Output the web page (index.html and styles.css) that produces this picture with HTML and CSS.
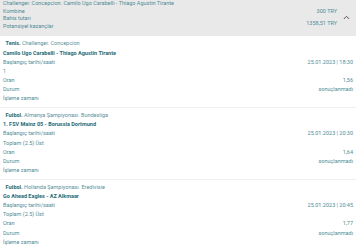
FILE: index.html
```html
<!DOCTYPE html>
<html lang="tr">
<head>
  <meta charset="UTF-8" />
  <meta name="viewport" content="width=device-width, initial-scale=1.0"/>
  <title>Kupon Detayı</title>
  <link rel="stylesheet" href="styles.css">
</head>
<body>

  <!-- KUPON ÖZETİ -->
  <div class="summary">
    <div class="summary-left">
      <div>Challenger. Concepcion. Camilo Ugo Carabelli - Thiago Agustin Tirante</div>
      <div>Kombine</div>
      <div>Bahis tutarı</div>
      <div>Potansiyel kazançlar</div>
    </div>
    <div class="summary-right">
      <div>300 TRY</div>
      <div>1358,51 TRY</div>
    </div>
    <svg class="chevron" width="7" height="5" viewBox="0 0 7 5">
      <path d="M0.8 4 L3.5 1.3 L6.2 4" fill="none" stroke="#555" stroke-width="1"/>
    </svg>
  </div>

  <!-- BAHİSLER -->
  <div class="bet">
    <div class="bet-title"><b>Tenis.</b> Challenger. Concepcion</div>
    <div class="bet-match">Camilo Ugo Carabelli - Thiago Agustin Tirante</div>
    <div class="row"><span>Başlangıç tarihi/saati</span><span>25.01.2023 | 18:30</span></div>
    <div class="row"><span>1</span></div>
    <div class="row"><span>Oran</span><span>1,56</span></div>
    <div class="row"><span>Durum</span><span>sonuçlanmadı</span></div>
    <div class="row"><span>İşleme zamanı</span></div>
  </div>

  <div class="bet">
    <div class="bet-title"><b>Futbol.</b> Almanya Şampiyonası. Bundesliga</div>
    <div class="bet-match">1. FSV Mainz 05 - Borussia Dortmund</div>
    <div class="row"><span>Başlangıç tarihi/saati</span><span>25.01.2023 | 20:30</span></div>
    <div class="row"><span>Toplam (2.5) Üst</span></div>
    <div class="row"><span>Oran</span><span>1,64</span></div>
    <div class="row"><span>Durum</span><span>sonuçlanmadı</span></div>
    <div class="row"><span>İşleme zamanı</span></div>
  </div>

  <div class="bet">
    <div class="bet-title"><b>Futbol.</b> Hollanda Şampiyonası. Eredivisie</div>
    <div class="bet-match">Go Ahead Eagles - AZ Alkmaar</div>
    <div class="row"><span>Başlangıç tarihi/saati</span><span>25.01.2023 | 20:45</span></div>
    <div class="row"><span>Toplam (2.5) Üst</span></div>
    <div class="row"><span>Oran</span><span>1,77</span></div>
    <div class="row"><span>Durum</span><span>sonuçlanmadı</span></div>
    <div class="row"><span>İşleme zamanı</span></div>
  </div>

</body>
</html>
```

FILE: styles.css
```css
body {
  font-family: Roboto, 'Liberation Sans', sans-serif;
  font-size: 5.5px;
  color: #4f8c96;
  background: #ffffff;
  margin: 0;
  padding: 0;
}

.summary {
  display: flex;
  align-items: center;
  background: #e9e9e9;
  padding: 0 3px 5px 3px;
  line-height: 7.7px;
}

.summary-left {
  flex: 1;
}

.summary-right {
  display: flex;
  flex-direction: column;
  align-items: flex-end;
  gap: 4.6px;
  line-height: 8px;
  margin-top: 3px;
}

.chevron {
  margin: 4px 3px 0 6px;
}

.bet {
  padding: 3.6px 3px 3.6px 3px;
  border-bottom: 1px solid #f0f0f0;
  line-height: 9.1px;
}

.bet-title {
  padding-left: 2.5px;
  color: #5b8f99;
}

.bet-title b {
  color: #1f6b78;
}

.bet-match {
  font-weight: bold;
  color: #1f6b78;
}

.row {
  display: flex;
  justify-content: space-between;
}
```
